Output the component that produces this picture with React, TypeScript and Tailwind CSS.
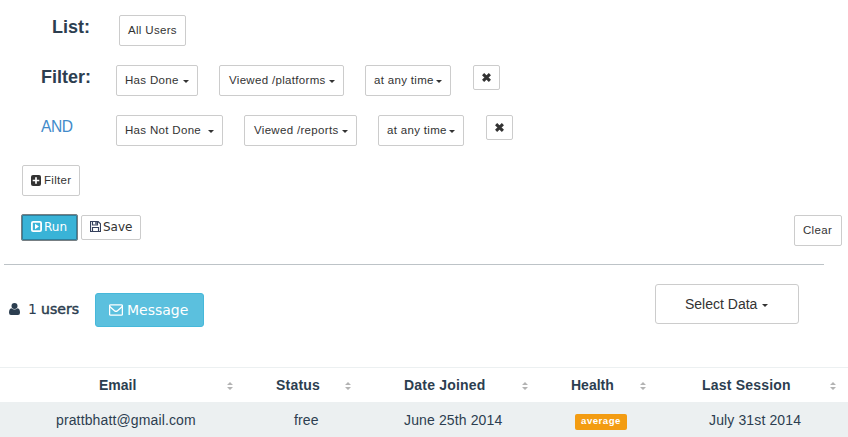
import React from 'react';

const sans = "font-['Liberation_Sans',Arial,sans-serif]";
const dejavu = "font-['DejaVu_Sans',Verdana,sans-serif]";

function Caret({ className = '' }: { className?: string }) {
  return (
    <svg className={`shrink-0 ${className}`} width="6" height="3" viewBox="0 0 6 3" fill="currentColor">
      <path d="M0 0h6L3 3z" />
    </svg>
  );
}

function Btn({ className, children }: { className: string; children: React.ReactNode }) {
  return (
    <button
      className={`flex h-[31px] shrink-0 items-center whitespace-nowrap rounded-[2px] border border-[#ccc] bg-white text-[11.5px] leading-[17px] tracking-[0.32px] text-[#333] ${className}`}
    >
      {children}
    </button>
  );
}

function Dropdown({ className, label }: { className: string; label: string }) {
  return (
    <Btn className={`justify-between pr-[8px] ${className}`}>
      {label}
      <Caret className="mt-[2px]" />
    </Btn>
  );
}

function RemoveButton({ className }: { className: string }) {
  return (
    <button
      aria-label="Remove"
      className={`flex h-[25px] w-[27px] shrink-0 items-center justify-center rounded-[2px] border border-[#ccc] bg-white text-[#333] ${className}`}
    >
      <svg width="9" height="9" viewBox="0 0 9 9" stroke="currentColor" strokeWidth="3" strokeLinecap="butt">
        <path d="M1.1 1.1l6.8 6.8M7.9 1.1L1.1 7.9" />
      </svg>
    </button>
  );
}

function Sorter() {
  return (
    <svg className="mt-[2px] shrink-0" width="6" height="8" viewBox="0 0 6 8" fill="#b3b3b3">
      <path d="M3 0l3 3H0zM0 5h6L3 8z" />
    </svg>
  );
}

function Th({ className, label, pad }: { className: string; label: string; pad: string }) {
  return (
    <div className={`flex h-full shrink-0 items-center justify-between whitespace-nowrap ${className}`}>
      <span className={pad}>{label}</span>
      <Sorter />
    </div>
  );
}

export default function App() {
  return (
    <div className={`h-[437px] w-[848px] overflow-hidden bg-white text-[#2c3e50] ${sans}`}>
      <div className="flex h-[65px] items-start pt-[15px]">
        <div className="w-[119px] pl-[52px] text-[18px] font-bold leading-[24px]">List:</div>
        <Btn className="w-[67px] pl-2">All Users</Btn>
      </div>

      <div className="flex h-[50px] items-start">
        <div className="w-[116px] pl-[41px] text-[18px] font-bold leading-[24px]">Filter:</div>
        <Dropdown className="w-[82px] pl-2" label="Has Done" />
        <Dropdown className="ml-[21px] w-[125px] pl-[9px]" label="Viewed /platforms" />
        <Dropdown className="ml-[21px] w-[86px] pl-2" label="at any time" />
        <RemoveButton className="ml-[22px]" />
      </div>

      <div className="flex h-[50px] items-start">
        <div className="w-[116px] pl-[41px] text-[15.6px] leading-[23px] tracking-[-0.4px] text-[#428bca]">AND</div>
        <Dropdown className="w-[107px] pl-2" label="Has Not Done" />
        <Dropdown className="ml-[21px] w-[113px] pl-[9px]" label="Viewed /reports" />
        <Dropdown className="ml-[21px] w-[86px] pl-2" label="at any time" />
        <RemoveButton className="ml-[22px]" />
      </div>

      <div className="flex h-[49px] items-start pl-[22px]">
        <Btn className="w-[58px] pl-2">
          <svg className="mr-[3px] shrink-0" width="10" height="11" viewBox="0 0 10 11">
            <rect width="10" height="11" rx="2" fill="#333" />
            <path d="M5 2.2v6.6M1.7 5.5h6.6" stroke="white" strokeWidth="1.7" />
          </svg>
          Filter
        </Btn>
      </div>

      <div className={`flex h-[50px] items-start pl-[21px] ${dejavu}`}>
        <button className="flex h-[27px] w-[57px] shrink-0 items-center rounded-[2px] border border-[#777f83] bg-[#39b3d7] pb-[2px] pl-[9px] text-[12px] text-white shadow-[inset_0_0_0_1px_#2f7f9c]">
          <svg className="mr-[2px] shrink-0" width="11" height="11" viewBox="0 0 11 11">
            <rect x=".9" y=".9" width="9.2" height="9.2" rx="1.2" fill="none" stroke="white" strokeWidth="1.8" />
            <path d="M4 2.8v5.4l4-2.7z" fill="white" />
          </svg>
          Run
        </button>
        <button className="ml-[3px] mt-px flex h-[25px] w-[60px] shrink-0 items-center rounded-[2px] border border-[#ccc] bg-white pb-[2px] pl-2 text-[12px] text-[#333]">
          <svg className="mr-[2px] shrink-0" width="11" height="11" viewBox="0 0 11 11" fill="none" stroke="#34405c">
            <path d="M.5 .5h7.6l2.4 2.4v7.6H.5zM2.5 .5v3.5h5V.5M2.5 10.5v-4h6v4" strokeWidth="1.15" />
            <path d="M6 1v2.5" strokeWidth="1.4" />
          </svg>
          Save
        </button>
        <Btn className={`ml-auto mr-[6px] mt-px w-[48px] pl-2 ${sans}`}>Clear</Btn>
      </div>

      <div className="ml-1 h-px w-[820px] bg-[#bdc3c7]" />

      <div className="flex h-[102px] items-start">
        <div className={`mt-[34px] flex h-[20px] w-[95px] items-center pl-[9px] text-[14px] ${dejavu}`}>
          <svg className="shrink-0" width="11" height="12" viewBox="0 0 11 12" fill="currentColor">
            <circle cx="5.5" cy="3" r="3" />
            <path d="M2.5 5.2Q5.5 8 8.5 5.2C10.5 5.5 11 7.5 11 9.8Q11 12 9 12H2Q0 12 0 9.8C0 7.5 .5 5.5 2.5 5.2z" />
          </svg>
          <span className="ml-2">1</span>
          <span className="ml-1 tracking-[0.1px] [-webkit-text-stroke:0.5px_currentColor]">users</span>
        </div>
        <button className={`mt-[28px] flex h-[34px] w-[109px] items-center rounded-[3px] border border-[#46b8da] bg-[#5bc0de] pl-[13px] text-[14px] text-white ${dejavu}`}>
          <svg className="mr-1 shrink-0" width="14" height="12" viewBox="0 0 14 12" fill="none" stroke="white" strokeWidth="1.3">
            <rect x=".6" y=".8" width="12.8" height="10.4" rx="1" />
            <path d="M.7 2.4L5.5 6.7Q7 8 8.5 6.7l4.8-4.3" />
          </svg>
          Message
        </button>
        <button className="ml-auto mr-[49px] mt-[19px] flex h-[40px] w-[144px] items-center rounded-[3px] border border-[#ccc] bg-white pl-[29px] text-[14px] text-[#333]">
          Select Data<Caret className="ml-[5px] mt-[2px]" />
        </button>
      </div>

      <div className="flex h-[35px] items-center border-t border-[#ecf0f1] text-[14px] font-bold">
        <Th className="w-[233px]" pad="pl-[99px]" label="Email" />
        <Th className="w-[118px]" pad="pl-[43px] tracking-[0.2px]" label="Status" />
        <Th className="w-[177px]" pad="pl-[53px] tracking-[0.2px]" label="Date Joined" />
        <Th className="w-[118px]" pad="pl-[43px]" label="Health" />
        <Th className="w-[190px]" pad="pl-[56px] tracking-[0.2px]" label="Last Session" />
      </div>
      <div className="flex h-[35px] items-center whitespace-nowrap bg-[#ecf0f1] pt-px text-[14px] tracking-[0.13px]">
        <div className="w-[238px] pl-[56px]">prattbhatt@gmail.com</div>
        <div className="w-[117px] pl-[56px]">free</div>
        <div className="w-[178px] pl-[49px]">June 25th 2014</div>
        <div className="w-[118px] pl-[42px]">
          <span className="mt-[3px] flex h-[16px] w-[52px] items-center justify-center rounded-[2px] bg-[#f39c12] text-[9.6px] font-bold tracking-[0.5px] text-white">
            average
          </span>
        </div>
        <div className="pl-[58px]">July 31st 2014</div>
      </div>
    </div>
  );
}
